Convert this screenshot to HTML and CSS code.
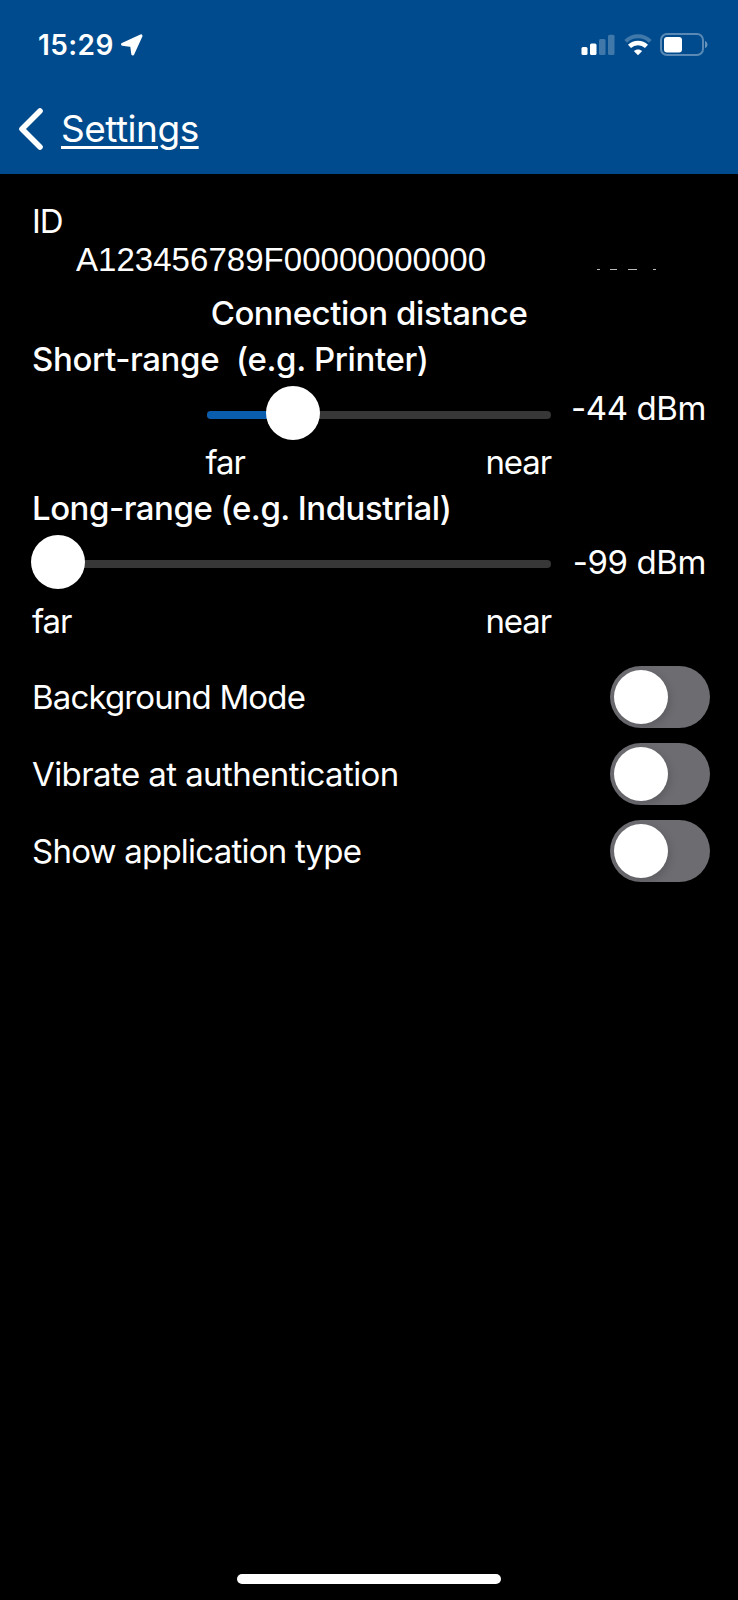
FILE: index.html
```html
<!DOCTYPE html>
<html lang="en">
<head>
    <meta charset="UTF-8">
    <meta name="viewport" content="width=device-width, initial-scale=1.0">
    <title>Settings</title>
    <link rel="stylesheet" href="styles.css">
</head>
<body>
    <header class="header">
        <div class="status-bar">
            <span class="time">15:29</span>
            <svg class="location" width="24" height="24" viewBox="0 0 24 24">
                <path d="M21 2.8 L12.8 21 L11.6 12.4 L2.5 11.3 Z" fill="#fff" stroke="#fff" stroke-width="3" stroke-linejoin="round"/>
            </svg>
            <div class="indicators">
                <svg width="34" height="22" viewBox="0 0 34 22" fill="#fff">
                    <rect x="0.5" y="13" width="6" height="8" rx="1.5"/>
                    <rect x="9" y="9.5" width="6.5" height="11.5" rx="1.5"/>
                    <rect x="18" y="5" width="6.5" height="16" rx="1.5" opacity="0.25"/>
                    <rect x="27" y="0.7" width="6.5" height="20.3" rx="1.5" opacity="0.25"/>
                </svg>
                <svg class="wifi" width="28" height="22" viewBox="0 0 28 22" fill="none" stroke="#fff" stroke-width="4">
                    <path d="M1.7 7.3 C8.5 0.6 19.5 0.6 26.3 7.3" opacity="0.25"/>
                    <path d="M5.5 12.3 C10.2 7.9 17.8 7.9 22.5 12.3" stroke-width="4.4"/>
                    <path d="M14 21.3 L9.8 17.1 C12.2 14.9 15.8 14.9 18.2 17.1 Z" fill="#fff" stroke="none"/>
                </svg>
                <svg class="battery" width="48" height="24" viewBox="0 0 48 24" fill="#fff">
                    <rect x="1" y="1" width="42" height="21" rx="6" fill="none" stroke="#fff" stroke-width="2" opacity="0.35"/>
                    <rect x="4" y="4" width="18" height="15.5" rx="3"/>
                    <path d="M45 8 C48.3 9 48.3 14.2 45 15.2 Z" opacity="0.4"/>
                </svg>
            </div>
        </div>
        <nav class="nav">
            <svg width="26" height="44" viewBox="0 0 26 44" fill="none" stroke="#fff" stroke-width="5.6" stroke-linecap="round" stroke-linejoin="round">
                <path d="M22 4 L4 22 L22 40"/>
            </svg>
            <a class="back" href="#">Settings</a>
        </nav>
    </header>

    <main class="content">
        <div class="id-label">ID</div>
        <div class="id-row">
            <span class="id-value">A123456789F00000000000</span>
            <svg class="id-rest" width="62" height="2" viewBox="0 0 62 2" fill="#bbb">
                <rect x="1" width="3" height="1"/>
                <rect x="14" width="7" height="1"/>
                <rect x="32" width="9" height="1"/>
                <rect x="57" width="3" height="1"/>
            </svg>
        </div>

        <h2 class="title">Connection distance</h2>

        <h3 class="range-title short-title">Short-range&nbsp; (e.g. Printer)</h3>
        <div class="range short">
            <div class="slider">
                <div class="track"><div class="fill"></div></div>
                <div class="thumb"></div>
            </div>
            <span class="value">-44 dBm</span>
            <div class="scale"><span>far</span><span>near</span></div>
        </div>

        <h3 class="range-title long-title">Long-range (e.g. Industrial)</h3>
        <div class="range long">
            <div class="slider">
                <div class="track"></div>
                <div class="thumb"></div>
            </div>
            <span class="value">-99 dBm</span>
            <div class="scale"><span>far</span><span>near</span></div>
        </div>

        <div class="switches">
            <div class="switch-row">
                <span class="background-mode">Background Mode</span>
                <div class="switch"></div>
            </div>
            <div class="switch-row">
                <span class="vibrate">Vibrate at authentication</span>
                <div class="switch"></div>
            </div>
            <div class="switch-row">
                <span class="show-type">Show application type</span>
                <div class="switch"></div>
            </div>
        </div>
    </main>

    <div class="home-indicator"></div>
</body>
</html>
```
FILE: styles.css
```css
* {
    box-sizing: border-box;
}
body {
    margin: 0;
    height: 1600px;
    display: flex;
    flex-direction: column;
    background: #000;
    color: #fff;
    font-family: Inter, "Liberation Sans", sans-serif;
    font-size: 33px;
    line-height: 40px;
    overflow: hidden;
}
svg {
    display: block;
    flex: none;
}
.header {
    height: 174px;
    background: #004b8d;
}
.status-bar {
    display: flex;
    align-items: center;
    height: 90px;
    padding: 0 30px 0 38px;
}
.time {
    width: 75px;
    font-size: 28px;
    font-weight: 600;
    letter-spacing: 0.4px;
    white-space: nowrap;
}
.location {
    margin-left: 7px;
}
.indicators {
    display: flex;
    align-items: center;
    margin-left: auto;
}
.wifi {
    margin-left: 9px;
}
.battery {
    margin-left: 8px;
}
.nav {
    display: flex;
    align-items: center;
    height: 78px;
    padding-left: 18px;
}
.back {
    margin-left: 17px;
    color: #fff;
    font-size: 37px;
    letter-spacing: -0.5px;
    text-decoration: underline;
    text-decoration-thickness: 3px;
    text-underline-offset: 4px;
}
.content {
    flex: 1;
    padding: 27px 32px 0;
}
.id-label {
    height: 39px;
    letter-spacing: -1px;
}
.id-row {
    display: flex;
    align-items: flex-start;
    height: 53px;
    padding-left: 44px;
    font-family: "Liberation Sans", Arial, sans-serif;
}
.id-value {
    letter-spacing: 0.04px;
}
.id-rest {
    margin: 29px 0 0 110px;
}
.title {
    margin: 0 0 6px;
    font-size: 33px;
    font-weight: 500;
    letter-spacing: -0.45px;
    text-align: center;
    white-space: nowrap;
}
.range-title {
    margin: 0;
    font-size: 33px;
    font-weight: 500;
    white-space: nowrap;
}
.short-title {
    letter-spacing: -0.38px;
}
.long-title {
    letter-spacing: -0.49px;
}
.range {
    display: grid;
    grid-template-columns: 519px 1fr;
}
.short {
    grid-template-rows: 63px 46px;
}
.long {
    grid-template-rows: 73px 65px;
}
.slider {
    position: relative;
    height: 54px;
    margin-top: 7px;
    padding-top: 25px;
}
.track {
    height: 8px;
    border-radius: 4px;
    background: #373737;
}
.fill {
    width: 86px;
    height: 8px;
    border-radius: 4px;
    background: #0a5cad;
}
.thumb {
    position: absolute;
    top: 0;
    left: -1px;
    width: 54px;
    height: 54px;
    border-radius: 50%;
    background: #fff;
}
.short .slider {
    margin-left: 175px;
}
.short .thumb {
    left: 58.5px;
}
.value {
    margin-top: 9px;
    letter-spacing: -0.4px;
    text-align: right;
    white-space: nowrap;
}
.long .value {
    margin-top: 14px;
}
.scale {
    display: flex;
    justify-content: space-between;
    letter-spacing: -1.1px;
}
.short .scale {
    margin-left: 173.5px;
}
.switches {
    display: flex;
    flex-direction: column;
    gap: 15px;
    margin-right: -4px;
}
.switch-row {
    display: flex;
    justify-content: space-between;
    align-items: center;
    height: 62px;
    white-space: nowrap;
}
.background-mode {
    letter-spacing: -0.85px;
}
.vibrate {
    letter-spacing: -0.58px;
}
.show-type {
    letter-spacing: -0.78px;
}
.switch {
    width: 100px;
    height: 62px;
    padding: 4px;
    border-radius: 31px;
    background: #6c6c71;
}
.switch::before {
    content: "";
    display: block;
    width: 54px;
    height: 54px;
    border-radius: 50%;
    background: #fff;
    box-shadow: 2px 3px 8px rgba(0, 0, 0, 0.15);
}
.home-indicator {
    width: 264px;
    height: 10px;
    margin: 0 auto 16px;
    border-radius: 5px;
    background: #fff;
}
```
